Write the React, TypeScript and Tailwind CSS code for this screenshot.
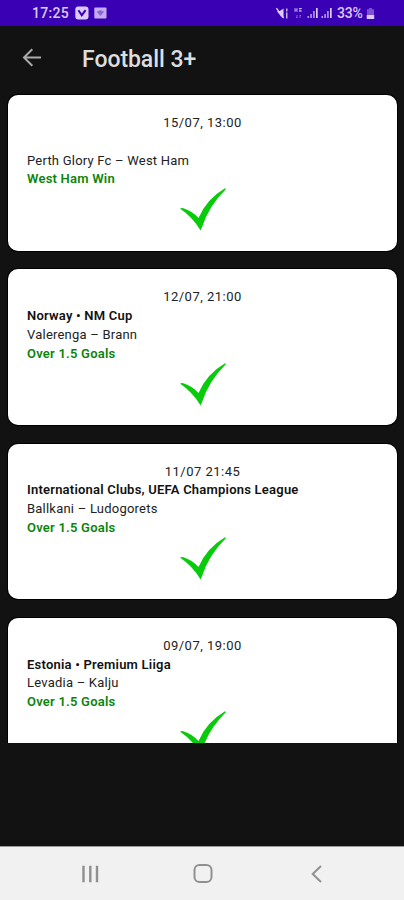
import React from 'react';

interface Tip {
    id: string;
    date: string;
    league?: string;
    match: string;
    pick: string;
}

const tips: Tip[] = [
    { id: '1', date: '15/07, 13:00', match: 'Perth Glory Fc – West Ham', pick: 'West Ham Win' },
    { id: '2', date: '12/07, 21:00', league: 'Norway • NM Cup', match: 'Valerenga – Brann', pick: 'Over 1.5 Goals' },
    {
        id: '3',
        date: '11/07 21:45',
        league: 'International Clubs, UEFA Champions League',
        match: 'Ballkani – Ludogorets',
        pick: 'Over 1.5 Goals',
    },
    { id: '4', date: '09/07, 19:00', league: 'Estonia • Premium Liiga', match: 'Levadia – Kalju', pick: 'Over 1.5 Goals' },
];

function SignalIcon() {
    return (
        <svg width="12" height="12" viewBox="0 0 12 12" fill="currentColor">
            <path d="M0.5 9h1.6v2H0.5zM3.3 7h1.6v4H3.3zM6.1 4h1.6v7H6.1z" opacity="0.75" />
            <path d="M9 1h1.7v10H9z" />
        </svg>
    );
}

function StatusBar() {
    return (
        <div className="flex h-[26px] shrink-0 items-center justify-between bg-[#3a00b3] pl-8 pr-[29px] text-[#dccbfa]">
            <div className="flex items-center">
                <span className="w-[43px] text-sm font-medium leading-none tracking-[0.3px]">17:25</span>
                <svg width="14" height="14" viewBox="0 0 14 14">
                    <rect x="0.3" y="0.5" width="13.2" height="13" rx="3" fill="currentColor" />
                    <path d="M3.4 4.2l3.4 5 3.8-5" fill="none" stroke="#3a00b3" strokeWidth="2" />
                </svg>
                <svg className="ml-[5px]" width="13" height="12" viewBox="0 0 13 12">
                    <rect x="0.3" y="0.5" width="12.2" height="11" rx="1" fill="currentColor" opacity="0.85" />
                    <path d="M2.8 4.8Q6.4 1.5 10 4.8L6.4 9z" fill="#8a66d6" />
                </svg>
            </div>
            <div className="flex items-center">
                <svg width="13" height="13" viewBox="0 0 13 13" fill="currentColor">
                    <path d="M0.8 4L3.4 4.2L7.5 1.5v10L4.8 9.2z" />
                    <path d="M0.4 1.2l7.2 9.6" stroke="currentColor" strokeWidth="1.4" />
                    <path d="M10 1.5h1.5v3H10zM10 5.5h1.5v6H10z" opacity="0.85" />
                </svg>
                <svg className="ml-1" width="11" height="12" viewBox="0 0 11 12" fill="none" stroke="currentColor">
                    <path d="M2 1v4M2 3h2M4 1v4M6 1.5h3M6 4h3M7 1v4" strokeWidth="1" opacity="0.75" />
                    <path d="M4 8v3M3 10l1 1M7 11V8M7 8l1 1" strokeWidth="0.9" opacity="0.5" />
                </svg>
                <span className="ml-[3px] flex gap-[2px]">
                    <SignalIcon />
                    <SignalIcon />
                </span>
                <span className="ml-1 w-7 text-sm font-medium leading-none tracking-[-0.2px]">33%</span>
                <svg className="ml-[1px]" width="9" height="13" viewBox="0 0 9 13" fill="currentColor">
                    <path d="M3 1h3v1.3h2V8H1V2.3h2z" opacity="0.4" />
                    <path d="M0.7 8h7.5v4H0.7z" />
                </svg>
            </div>
        </div>
    );
}

function Header() {
    return (
        <div className="flex h-[66px] shrink-0 items-center pl-[22px]">
            <svg className="-mt-[2px]" width="20" height="20" viewBox="0 0 20 20" fill="none" stroke="#aaaaaa" strokeWidth="2">
                <path d="M19 9.5H2.5M10.3 1.2L2 9.5l8.3 8.3" />
            </svg>
            <h1 className="ml-10 text-[23px] font-medium leading-none tracking-[-0.05px] text-[#dedede]">Football 3+</h1>
        </div>
    );
}

function TipCard({ tip }: { tip: Tip }) {
    return (
        <div className="flex h-[155.7px] shrink-0 flex-col rounded-[10px] bg-white px-[19px] pt-[19.2px] text-[13px] leading-[18.7px] tracking-[0.22px] text-[#222222] ring-1 ring-black">
            <p className="text-center tracking-[0.5px]">{tip.date}</p>
            <p className="h-[18.7px] font-semibold text-[#111111]">{tip.league}</p>
            <p>{tip.match}</p>
            <p className="font-semibold text-[#0b840b]">{tip.pick}</p>
            <svg className="-mt-[0.7px] ml-[152.5px]" width="46" height="43" viewBox="0 0 46 43" fill="#08cb0c">
                <path d="M0.2 20.8Q1 19.4 3.4 20.2Q12.4 23 18.5 30Q26.5 11 45 0.2L46 1Q28.5 18.5 22.3 38.6L20.6 42.6Q12.5 29 0.2 20.8Z" />
            </svg>
        </div>
    );
}

export default function App() {
    return (
        <div className="flex h-[900px] w-[404px] flex-col overflow-hidden bg-[#121212] font-['Roboto',sans-serif]">
            <StatusBar />
            <Header />
            <div className="flex h-[651px] shrink-0 flex-col gap-[18.6px] overflow-hidden pl-[8px] pr-[7px] pt-[3px]">
                {tips.map((tip) => (
                    <TipCard key={tip.id} tip={tip} />
                ))}
            </div>
            <div className="mt-auto flex h-[54px] shrink-0 items-center border-t border-[#999999] bg-[#f1f1f1] pl-[81px] text-[#909090]">
                <svg width="18" height="18" viewBox="0 0 18 18" fill="none" stroke="currentColor" strokeWidth="2.4">
                    <path d="M2.5 0.8v16.5M9.3 0.8v16.5M16 0.8v16.5" />
                </svg>
                <svg className="ml-[94px]" width="20" height="20" viewBox="0 0 20 20" fill="none" stroke="currentColor" strokeWidth="2">
                    <rect x="1.5" y="1" width="17" height="17" rx="5" />
                </svg>
                <svg className="ml-[98px]" width="12" height="18" viewBox="0 0 12 18" fill="none" stroke="currentColor" strokeWidth="2">
                    <path d="M10 1L1.7 9l8.3 8" />
                </svg>
            </div>
        </div>
    );
}
